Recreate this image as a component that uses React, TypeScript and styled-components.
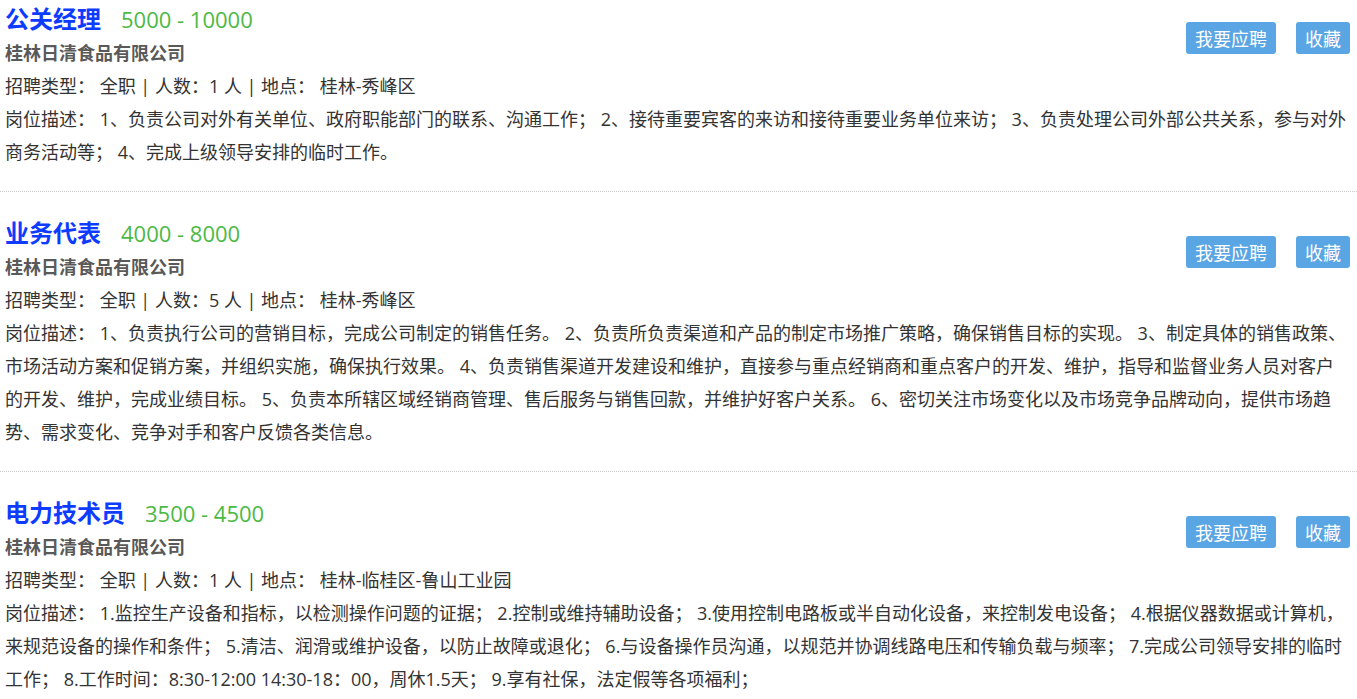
import React from 'react'
import styled, { createGlobalStyle } from 'styled-components'

const GlobalStyle = createGlobalStyle`
  html, body {
    margin: 0;
    padding: 0;
    background: #ffffff;
  }
  body {
    font-family: "Open Sans", "Noto Sans CJK SC", sans-serif;
    color: #333333;
    font-size: 18px;
  }
`

const List = styled.div`
  display: flex;
  flex-direction: column;
  width: 1357px;
`

const Item = styled.div`
  padding: 24px 7px 22px 5px;
  border-bottom: 1px dotted #c8c8c8;

  &:first-child {
    padding-top: 2px;
  }
`

const Header = styled.div`
  display: flex;
  justify-content: space-between;
  align-items: flex-start;
`

const TitleRow = styled.div`
  display: flex;
  align-items: baseline;
  gap: 20px;
  height: 34px;
  line-height: 34px;
`

const Title = styled.h3`
  margin: 0;
  font-size: 24px;
  font-weight: 700;
  color: #0d3bff;
  line-height: 34px;
`

const Salary = styled.span`
  font-size: 22px;
  color: #4cb944;
`

const Company = styled.div`
  font-size: 18px;
  font-weight: 700;
  color: #595959;
  line-height: 34px;
`

const Actions = styled.div`
  display: flex;
  gap: 20px;
  margin-top: 20px;
`

const ActionButton = styled.button`
  height: 32px;
  padding: 0 9px;
  border: none;
  border-radius: 3px;
  background: #5aa5e4;
  color: #ffffff;
  font-family: "Noto Sans CJK SC", sans-serif;
  font-size: 18px;
  line-height: 32px;
  cursor: pointer;
`

const Line = styled.div`
  line-height: 33px;
  font-size: 18px;
  color: #333333;
`

type Job = {
  title: string
  salary: string
  company: string
  count: number
  location: string
  desc: string
}

const JOBS: Job[] = [
  {
    title: '公关经理',
    salary: '5000 - 10000',
    company: '桂林日清食品有限公司',
    count: 1,
    location: '桂林-秀峰区',
    desc: '1、负责公司对外有关单位、政府职能部门的联系、沟通工作； 2、接待重要宾客的来访和接待重要业务单位来访； 3、负责处理公司外部公共关系，参与对外商务活动等； 4、完成上级领导安排的临时工作。',
  },
  {
    title: '业务代表',
    salary: '4000 - 8000',
    company: '桂林日清食品有限公司',
    count: 5,
    location: '桂林-秀峰区',
    desc: '1、负责执行公司的营销目标，完成公司制定的销售任务。 2、负责所负责渠道和产品的制定市场推广策略，确保销售目标的实现。 3、制定具体的销售政策、市场活动方案和促销方案，并组织实施，确保执行效果。 4、负责销售渠道开发建设和维护，直接参与重点经销商和重点客户的开发、维护，指导和监督业务人员对客户的开发、维护，完成业绩目标。 5、负责本所辖区域经销商管理、售后服务与销售回款，并维护好客户关系。 6、密切关注市场变化以及市场竞争品牌动向，提供市场趋势、需求变化、竞争对手和客户反馈各类信息。',
  },
  {
    title: '电力技术员',
    salary: '3500 - 4500',
    company: '桂林日清食品有限公司',
    count: 1,
    location: '桂林-临桂区-鲁山工业园',
    desc: '1.监控生产设备和指标，以检测操作问题的证据； 2.控制或维持辅助设备； 3.使用控制电路板或半自动化设备，来控制发电设备； 4.根据仪器数据或计算机，来规范设备的操作和条件； 5.清洁、润滑或维护设备，以防止故障或退化； 6.与设备操作员沟通，以规范并协调线路电压和传输负载与频率； 7.完成公司领导安排的临时工作； 8.工作时间：8:30-12:00 14:30-18：00，周休1.5天； 9.享有社保，法定假等各项福利；',
  },
]

export default function App() {
  return (
    <>
      <GlobalStyle />
      <List>
        {JOBS.map((job) => (
          <Item key={job.title}>
            <Header>
              <div>
                <TitleRow>
                  <Title>{job.title}</Title>
                  <Salary>{job.salary}</Salary>
                </TitleRow>
                <Company>{job.company}</Company>
              </div>
              <Actions>
                <ActionButton>我要应聘</ActionButton>
                <ActionButton>收藏</ActionButton>
              </Actions>
            </Header>
            <Line>{`招聘类型：  全职 | 人数：${job.count} 人 | 地点：  ${job.location}`}</Line>
            <Line>{`岗位描述：  ${job.desc}`}</Line>
          </Item>
        ))}
      </List>
    </>
  )
}
